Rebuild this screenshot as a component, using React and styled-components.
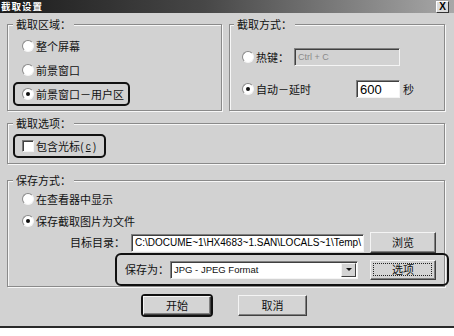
import React from 'react';
import styled, { createGlobalStyle } from 'styled-components';

const GlobalStyle = createGlobalStyle`
  html, body { margin: 0; padding: 0; background: #fff; }
  body { font-family: "Noto Sans CJK SC", "Liberation Sans", sans-serif; }
`;

const Dialog = styled.div`
  width: 454px;
  height: 336px;
  display: flex;
  flex-direction: column;
  background: #d2d2d2;
  overflow: hidden;
  color: #111;
  font-size: 11px;
  line-height: 13px;
`;

const TitleBar = styled.div`
  flex: none;
  height: 13px;
  display: flex;
  align-items: center;
  justify-content: space-between;
  padding: 0 5px 0 1px;
  background: linear-gradient(to right, #1c1c1c, #474747 45%, #a8a8a8);
`;

const Title = styled.span`
  color: #fff;
  font-weight: 700;
  font-size: 9.5px;
  line-height: 13px;
  letter-spacing: 1px;
`;

const CloseButton = styled.span`
  box-sizing: border-box;
  width: 13px;
  height: 12px;
  background: #dcdcdc;
  border: 1px solid;
  border-color: #fff #333 #333 #fff;
  font: bold 10px "Liberation Sans", sans-serif;
  line-height: 10px;
  text-align: center;
  color: #000;
`;

const Body = styled.div`
  flex: 1;
  display: flex;
  flex-direction: column;
  padding: 11px 9px 0 7px;
`;

const TopRow = styled.div`
  display: flex;
  gap: 7px;
`;

const Group = styled.div`
  position: relative;
  flex: ${p => (p.$grow ? '1' : 'none')};
  box-sizing: border-box;
  display: flex;
  flex-direction: column;
  align-items: flex-start;
  width: ${p => (p.$width ? `${p.$width}px` : 'auto')};
  height: ${p => (p.$height ? `${p.$height}px` : 'auto')};
  margin-top: ${p => p.$top || 0}px;
  padding-top: ${p => p.$padTop || 0}px;
  border: 1px solid #8a8a8a;
  box-shadow: inset 1px 1px 0 #f7f7f7, 1px 1px 0 #f7f7f7;
`;

const Legend = styled.span`
  position: absolute;
  top: -7px;
  left: ${p => p.$left || 5}px;
  padding: 0 3px;
  background: #d2d2d2;
  line-height: 13px;
`;

const Option = styled.div`
  box-sizing: border-box;
  display: inline-flex;
  align-items: center;
  gap: ${p => p.$gap ?? 2}px;
  height: ${p => p.$h || 24}px;
  margin-left: 5px;
  padding: 0 ${p => p.$padRight ?? 4}px 0 7px;
  border: 2px solid ${p => (p.$marked ? '#111' : 'transparent')};
  border-radius: 5px;
  white-space: nowrap;
`;

const Radio = styled.span`
  flex: none;
  box-sizing: border-box;
  width: 12px;
  height: 12px;
  display: inline-flex;
  align-items: center;
  justify-content: center;
  border-radius: 50%;
  border: 1px solid;
  border-color: #8a8a8a #f4f4f4 #f4f4f4 #8a8a8a;
  background: #fff;

  &::after {
    content: '';
    display: ${p => (p.$checked ? 'block' : 'none')};
    width: 4px;
    height: 4px;
    border-radius: 50%;
    background: #111;
  }
`;

const Check = styled.span`
  flex: none;
  box-sizing: border-box;
  width: 12px;
  height: 12px;
  border: 1px solid;
  border-color: #7a7a7a #f4f4f4 #f4f4f4 #7a7a7a;
  box-shadow: inset 1px 1px 0 #404040;
  background: #fff;
`;

const Hotkey = styled.u`
  font-family: "Liberation Sans", sans-serif;
  font-size: 10px;
`;

const FieldRow = styled.div`
  display: flex;
  align-items: center;
  height: 18px;
  margin-top: ${p => p.$top || 0}px;
  padding-left: 12px;
`;

const FieldLabel = styled.span`
  flex: none;
  width: ${p => p.$w}px;
  margin-left: 2px;
  white-space: nowrap;
`;

const TextBox = styled.div`
  flex: none;
  box-sizing: border-box;
  display: flex;
  align-items: center;
  width: ${p => p.$w}px;
  height: ${p => p.$h || 18}px;
  padding-left: 3px;
  border: 1px solid;
  border-color: #808080 #f4f4f4 #f4f4f4 #808080;
  box-shadow: inset 1px 1px 0 #404040;
  background: ${p => (p.$disabled ? '#d2d2d2' : '#fff')};
  color: ${p => (p.$disabled ? '#8a8a8a' : '#000')};
  font-family: "Liberation Sans", Arial, sans-serif;
  font-size: ${p => p.$fs || 10}px;
  white-space: nowrap;
  overflow: hidden;
`;

const Unit = styled.span`
  margin-left: 3px;
`;

const PathRow = styled.div`
  display: flex;
  align-items: center;
  height: 21px;
  padding-left: 62px;
  gap: 6px;
`;

const RowLabel = styled.span`
  flex: none;
  width: ${p => p.$w}px;
  text-align: ${p => p.$align || 'left'};
  white-space: nowrap;
`;

const SaveAsBox = styled.div`
  box-sizing: border-box;
  display: flex;
  align-items: center;
  width: 334px;
  height: 33px;
  margin-left: 107px;
  padding-left: 8px;
  border: 2px solid #111;
  border-radius: 6px;
`;

const Combo = styled.div`
  box-sizing: border-box;
  display: flex;
  align-items: stretch;
  width: 188px;
  height: 18px;
  padding: 1px;
  border: 1px solid;
  border-color: #808080 #f4f4f4 #f4f4f4 #808080;
  box-shadow: inset 1px 1px 0 #404040;
  background: #fff;
`;

const ComboText = styled.span`
  flex: 1;
  display: flex;
  align-items: center;
  padding-left: 2px;
  font-family: "Liberation Sans", Arial, sans-serif;
  font-size: 9.5px;
  white-space: nowrap;
`;

const DropButton = styled.span`
  box-sizing: border-box;
  width: 15px;
  display: flex;
  align-items: center;
  justify-content: center;
  background: #d4d4d4;
  border: 1px solid;
  border-color: #f4f4f4 #404040 #404040 #f4f4f4;

  &::after {
    content: '';
    border-left: 3px solid transparent;
    border-right: 3px solid transparent;
    border-top: 3px solid #111;
  }
`;

const PushButton = styled.div`
  flex: none;
  position: relative;
  box-sizing: border-box;
  display: flex;
  align-items: center;
  justify-content: center;
  width: ${p => p.$w}px;
  height: ${p => p.$h}px;
  margin-left: ${p => p.$left || 0}px;
  background: #d4d4d4;
  border: 1px solid;
  border-color: #f4f4f4 #404040 #404040 #f4f4f4;
  box-shadow: inset -1px -1px 0 #808080;
  white-space: nowrap;

  &::after {
    content: '';
    display: ${p => (p.$focus ? 'block' : 'none')};
    position: absolute;
    inset: 2px 3px 3px 2px;
    border: 1px dotted #222;
  }
`;

const ButtonRow = styled.div`
  display: flex;
  align-items: center;
  justify-content: center;
  gap: 25px;
  height: 23px;
  margin-top: 7px;
  padding-right: 4px;
`;

const Marked = styled.div`
  box-sizing: border-box;
  width: 72px;
  height: 23px;
  border: 2px solid #111;
  border-radius: 4px;
  display: flex;
  align-items: center;
  justify-content: center;
`;

const Footer = styled.div`
  flex: none;
  box-sizing: border-box;
  height: 10px;
  border-top: 2px solid #2a2a2a;
  background: #fff;
`;

export default function App() {
  return (
    <>
      <GlobalStyle />
      <Dialog>
        <TitleBar>
          <Title>截取设置</Title>
          <CloseButton>X</CloseButton>
        </TitleBar>
        <Body>
          <TopRow>
            <Group $width={215} $height={87} $padTop={9}>
              <Legend>截取区域：</Legend>
              <Option><Radio />整个屏幕</Option>
              <Option><Radio />前景窗口</Option>
              <Option $marked><Radio $checked />前景窗口－用户区</Option>
            </Group>
            <Group $grow $height={87} $padTop={23}>
              <Legend $left={4}>截取方式：</Legend>
              <FieldRow>
                <Radio />
                <FieldLabel $w={38}>热键：</FieldLabel>
                <TextBox $w={106} $disabled $fs={9}>Ctrl + C</TextBox>
              </FieldRow>
              <FieldRow $top={14}>
                <Radio $checked />
                <FieldLabel $w={100}>自动－延时</FieldLabel>
                <TextBox $w={44} $fs={13}>600</TextBox>
                <Unit>秒</Unit>
              </FieldRow>
            </Group>
          </TopRow>

          <Group $height={41} $top={12} $padTop={10}>
            <Legend>截取选项：</Legend>
            <Option $marked $padRight={8}>
              <Check />
              包含光标(<Hotkey>c</Hotkey>)
            </Option>
          </Group>

          <Group $top={16} $padTop={7}>
            <Legend>保存方式：</Legend>
            <Option $h={22}><Radio />在查看器中显示</Option>
            <Option $h={22}><Radio $checked />保存截取图片为文件</Option>
            <PathRow>
              <RowLabel $w={55} $align="right">目标目录：</RowLabel>
              <TextBox $w={233} $h={18}>C:\DOCUME~1\HX4683~1.SAN\LOCALS~1\Temp\</TextBox>
              <PushButton $w={66} $h={21}>浏览</PushButton>
            </PathRow>
            <SaveAsBox>
              <RowLabel $w={45}>保存为：</RowLabel>
              <Combo>
                <ComboText>JPG - JPEG Format</ComboText>
                <DropButton />
              </Combo>
              <PushButton $w={66} $h={20} $left={12} $focus>选项</PushButton>
            </SaveAsBox>
          </Group>

          <ButtonRow>
            <Marked>
              <PushButton $w={68} $h={19}>开始</PushButton>
            </Marked>
            <PushButton $w={69} $h={21}>取消</PushButton>
          </ButtonRow>
        </Body>
        <Footer />
      </Dialog>
    </>
  );
}
